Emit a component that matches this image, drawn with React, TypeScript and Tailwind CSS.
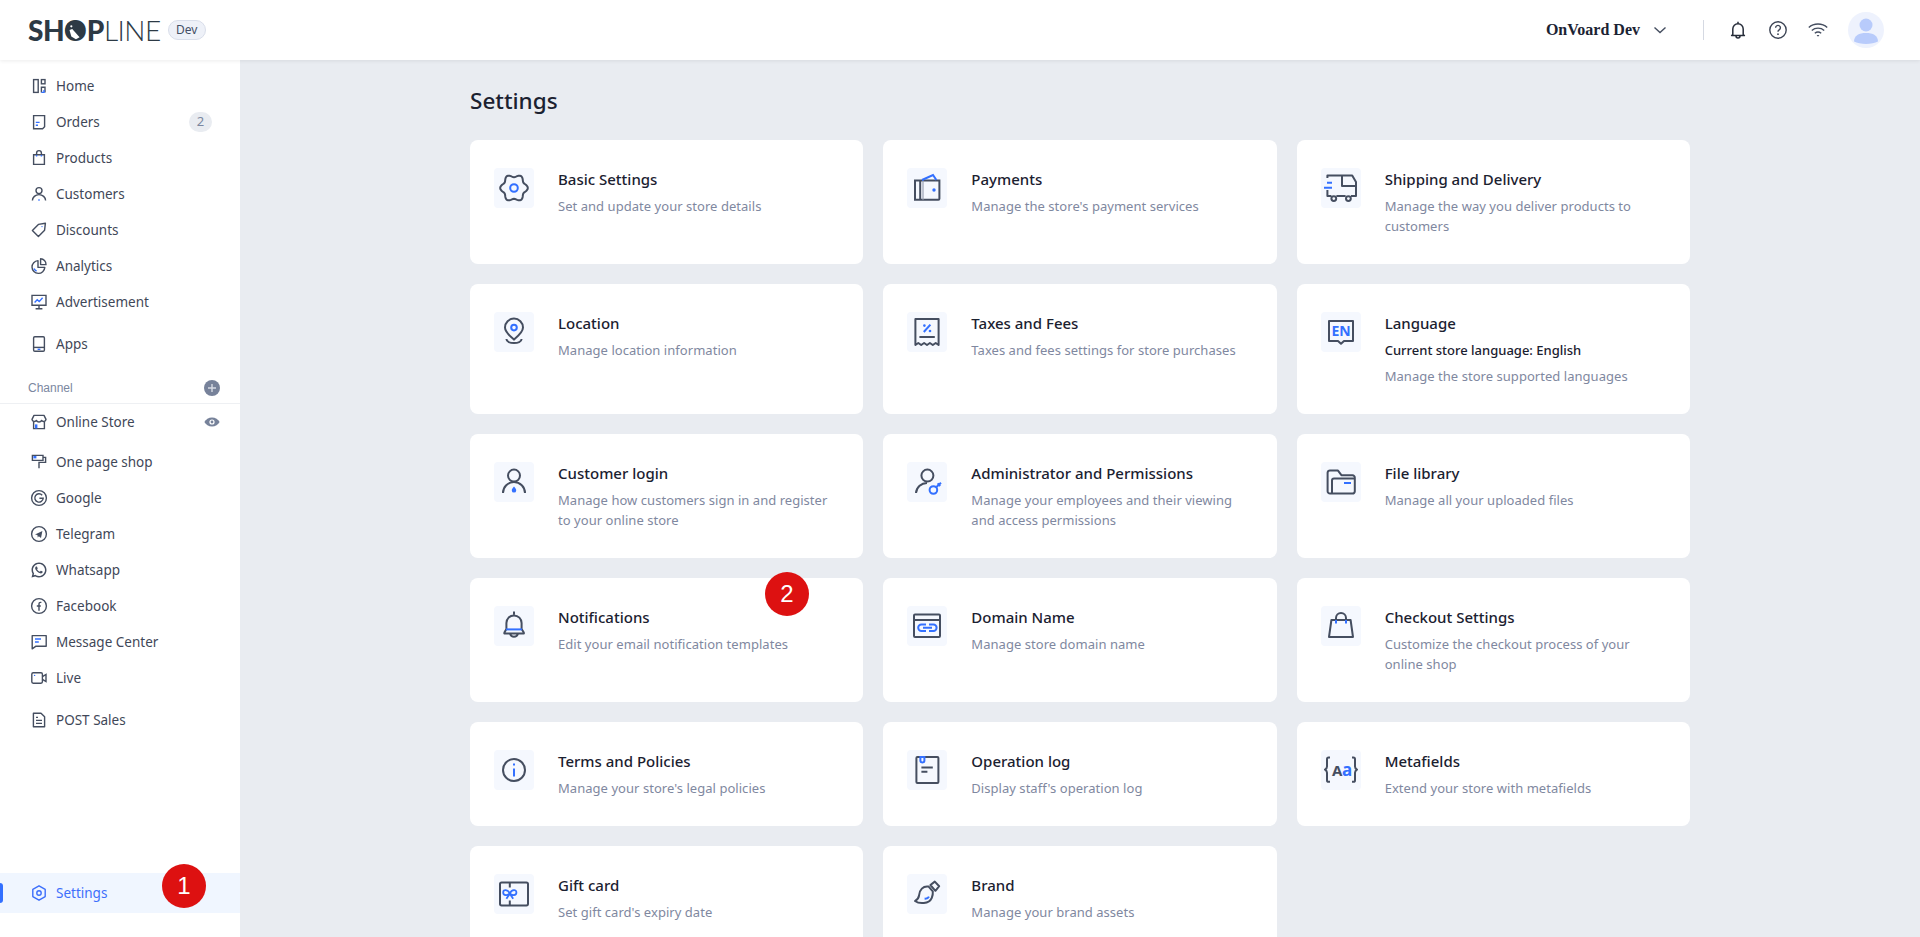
import type { ReactNode } from "react";
import { RiWhatsappLine } from "react-icons/ri";

const D = "#454e60";
const B = "#3370ff";

function Side({ children }: { children: ReactNode }) {
  return (
    <svg viewBox="0 0 18 18" className="w-[18px] h-[18px] shrink-0" fill="none" stroke={D} strokeWidth="1.4">
      {children}
    </svg>
  );
}

function Big({ children }: { children: ReactNode }) {
  return (
    <div className="w-10 h-10 shrink-0 rounded bg-[#f5f8fe]">
      <svg viewBox="0 0 40 40" className="w-10 h-10 overflow-visible" fill="none" stroke={D} strokeWidth="2">
        {children}
      </svg>
    </div>
  );
}

// scalloped outline of the settings gear
const gearPath =
  Array.from({ length: 72 }, (_, i) => {
    const t = (i * 5 * Math.PI) / 180;
    const r = 12.3 + 1.5 * Math.cos(6 * t);
    return `${i === 0 ? "M" : "L"}${(20 + r * Math.cos(t)).toFixed(2)} ${(20 + r * Math.sin(t)).toFixed(2)}`;
  }).join(" ") + " Z";

const navTop = [
  {
    label: "Home",
    icon: (
      <Side>
        <rect x="3.6" y="2.6" width="4.6" height="12.8" />
        <rect x="11.4" y="2.6" width="3.6" height="4.2" />
        <path d="M11.4 15.4v-5.2H15v5.2" />
        <path d="M11.4 15.4h2.6v-2.4" stroke={B} />
      </Side>
    ),
  },
  {
    label: "Orders",
    badge: "2",
    icon: (
      <Side>
        <path d="M3.6 2.6h11v11.2l-2 2h-9z" />
        <path d="M5.8 9.4h3.8M5.8 12.2h2.2" stroke={B} />
      </Side>
    ),
  },
  {
    label: "Products",
    icon: (
      <Side>
        <path d="M3.6 5.8h10.8v9.6H3.6z" />
        <path d="M6.6 5.8V4a2.4 2.4 0 0 1 4.8 0v1.8" />
        <path d="M6.6 6v1.4M11.4 6v1.4" stroke={B} />
      </Side>
    ),
  },
  {
    label: "Customers",
    icon: (
      <Side>
        <circle cx="9" cy="5.6" r="3" />
        <path d="M2.4 15.6a6.6 6 0 0 1 13.2 0" />
        <path d="M9 14.2v1.6" stroke={B} />
      </Side>
    ),
  },
  {
    label: "Discounts",
    icon: (
      <Side>
        <path d="M2.4 9.6l6-6.2 7-1.2-.8 7-6.2 6.4z" strokeLinejoin="round" />
        <circle cx="12" cy="5.6" r=".7" fill={B} stroke="none" />
      </Side>
    ),
  },
  {
    label: "Analytics",
    icon: (
      <Side>
        <path d="M8 3.6a6.4 6.4 0 1 0 6.8 6.8H8z" strokeLinejoin="round" />
        <path d="M10.6 1.8a5.6 5.6 0 0 1 5.4 5.8h-5.4z" strokeLinejoin="round" />
        <path d="M4 11.4a4.4 4.4 0 0 0 2.6 2.6" stroke={B} />
      </Side>
    ),
  },
  {
    label: "Advertisement",
    icon: (
      <Side>
        <path d="M2 2.4h14v9.8H2zM9 12.2v3.4M5.6 15.8h6.8" />
        <path d="M4.6 9.4l2.6-2.6 2 1.8 3.4-3.8" stroke={B} />
      </Side>
    ),
  },
];

const navChannels = [
  {
    label: "One page shop",
    icon: (
      <Side>
        <path d="M2.4 2.4h10.6v5H2.4z" />
        <path d="M13 4.4h2.6v5H9v5.8" />
        <rect x="3.4" y="3" width="3" height="2.4" fill={B} stroke="none" />
      </Side>
    ),
  },
  {
    label: "Google",
    icon: (
      <Side>
        <circle cx="9" cy="9" r="7.4" />
        <path d="M12.2 6.2a4.2 4.2 0 1 0 1 3H9.4" />
      </Side>
    ),
  },
  {
    label: "Telegram",
    icon: (
      <Side>
        <circle cx="9" cy="9" r="7.4" />
        <path d="M5 9.4l7.4-3.4-1.4 7-2.2-1.8-1 1.2-.4-2.4z" fill={D} stroke="none" />
      </Side>
    ),
  },
  {
    label: "Whatsapp",
    icon: <RiWhatsappLine className="w-[18px] h-[18px] shrink-0 text-[#454e60]" />,
  },
  {
    label: "Facebook",
    icon: (
      <Side>
        <circle cx="9" cy="9" r="7.4" />
        <path d="M11.4 5.4h-1a1.4 1.4 0 0 0-1.4 1.4v7M6.8 9h4" />
      </Side>
    ),
  },
  {
    label: "Message Center",
    icon: (
      <Side>
        <path d="M2.2 2.6h14v10.6H6l-3.8 2.6z" strokeLinejoin="round" />
        <path d="M5 6h6M5 9h3.8" stroke={B} />
      </Side>
    ),
  },
  {
    label: "Live",
    icon: (
      <Side>
        <rect x="1.8" y="3.8" width="10.6" height="10.4" rx="1.4" />
        <path d="M12.4 7.6l3.6-2.2v7.2l-3.6-2.2" />
        <circle cx="4.6" cy="6.4" r=".7" fill={B} stroke="none" />
      </Side>
    ),
  },
];

const cards = [
  {
    title: "Basic Settings",
    desc: "Set and update your store details",
    icon: (
      <Big>
        <path d={gearPath} strokeLinejoin="round" />
        <circle cx="20" cy="20" r="3.8" stroke={B} />
      </Big>
    ),
  },
  {
    title: "Payments",
    desc: "Manage the store's payment services",
    icon: (
      <Big>
        <path d="M8 12.4h24.4v18.4a1 1 0 0 1-1 1H8z" />
        <path d="M13.2 12.4v19.4" />
        <path d="M16 12.4v19.4" stroke="#9aa2b2" strokeWidth="1.2" />
        <path d="M15 12l11-5 3.4 5" stroke={B} />
        <circle cx="27" cy="22" r="1.7" fill={B} stroke="none" />
      </Big>
    ),
  },
  {
    title: "Shipping and Delivery",
    desc: "Manage the way you deliver products to customers",
    icon: (
      <Big>
        <path d="M6.4 10V7.4H21V18h14M21 7.4h10.2L35 14v14H30M6.4 22v6h4M15.4 28H24.6" strokeLinejoin="round" />
        <circle cx="12.8" cy="30.6" r="2.4" />
        <circle cx="27.4" cy="30.6" r="2.4" />
        <path d="M6 14.7h5M3 19.7h8" stroke={B} />
      </Big>
    ),
  },
  {
    title: "Location",
    desc: "Manage location information",
    icon: (
      <Big>
        <path d="M20 27.6c-4-3.4-9-7.4-9-12a9 9 0 0 1 18 0c0 4.6-5 8.6-9 12z" />
        <circle cx="20" cy="15.6" r="2.8" stroke={B} />
        <path d="M12.4 27c.2 5.4 15 5.4 15.2 0" />
      </Big>
    ),
  },
  {
    title: "Taxes and Fees",
    desc: "Taxes and fees settings for store purchases",
    icon: (
      <Big>
        <path d="M8.4 33V7h23.2v26l-2.9-2-2.9 2-2.9-2-2.9 2-2.9-2-2.9 2-2.9-2z" strokeLinejoin="round" />
        <path d="M12.4 25h15.4" />
        <path d="M23.4 12.6l-6.6 7.4" stroke={B} />
        <circle cx="17.4" cy="13.6" r="1.3" fill={B} stroke="none" />
        <circle cx="23" cy="19" r="1.3" fill={B} stroke="none" />
      </Big>
    ),
  },
  {
    title: "Language",
    current: "Current store language: English",
    desc: "Manage the store supported languages",
    icon: (
      <Big>
        <path d="M8 9h24v20h-9l-3 2.8-3-2.8H8z" strokeLinejoin="round" />
        <text x="20" y="24" textAnchor="middle" fill={B} stroke="none" fontFamily="'Noto Sans', sans-serif" fontWeight="700" fontSize="14">
          EN
        </text>
      </Big>
    ),
  },
  {
    title: "Customer login",
    desc: "Manage how customers sign in and register to your online store",
    icon: (
      <Big>
        <circle cx="20" cy="13.6" r="6" />
        <path d="M9 31a11 11 0 0 1 22 0" />
        <path d="M20 24.6c1.6 2 2.2 2.9 2.2 3.8a2.2 2.2 0 0 1-4.4 0c0-.9.6-1.8 2.2-3.8z" fill={B} stroke="none" />
      </Big>
    ),
  },
  {
    title: "Administrator and Permissions",
    desc: "Manage your employees and their viewing and access permissions",
    icon: (
      <Big>
        <circle cx="20.4" cy="13.6" r="6" />
        <path d="M9 31a11 11 0 0 1 11-10" />
        <circle cx="26.4" cy="28" r="3.8" stroke={B} />
        <path d="M29.4 25l4.6-4.2M30.6 21.4l2.6 2.6" stroke={B} />
      </Big>
    ),
  },
  {
    title: "File library",
    desc: "Manage all your uploaded files",
    icon: (
      <Big>
        <path d="M11 31.6H9a2.4 2.4 0 0 1-2.4-2.4V10.6A2.4 2.4 0 0 1 9 8.6h8l3.4 4.6H31.4A2.4 2.4 0 0 1 33.8 16v13.4a2.4 2.4 0 0 1-2.4 2.2H11z" strokeLinejoin="round" />
        <path d="M11 31.4V18.4a2 2 0 0 1 2-2h20.6" />
        <path d="M23 21h7" stroke={B} />
      </Big>
    ),
  },
  {
    title: "Notifications",
    desc: "Edit your email notification templates",
    icon: (
      <Big>
        <path d="M20 5.6v3M12.4 23V17a7.6 7.6 0 0 1 15.2 0v6l2.2 3.6a.6.6 0 0 1-.5 1H10.9a.6.6 0 0 1-.5-1z" strokeLinejoin="round" />
        <path d="M16.2 27.8a3.9 3.9 0 0 0 7.6 0" />
        <path d="M12 23.4h16" stroke={B} />
      </Big>
    ),
  },
  {
    title: "Domain Name",
    desc: "Manage store domain name",
    icon: (
      <Big>
        <rect x="7" y="8.4" width="26" height="22.6" rx="1" />
        <path d="M7 14h26" />
        <path d="M19 18.6h-4.6a3.2 3.2 0 0 0 0 6.4H19M22 18.6h4.4a3.2 3.2 0 0 1 0 6.4H22M16 21.8h9" stroke={B} />
      </Big>
    ),
  },
  {
    title: "Checkout Settings",
    desc: "Customize the checkout process of your online shop",
    icon: (
      <Big>
        <path d="M10.4 14h19.2L32 31H8z" strokeLinejoin="round" />
        <path d="M15 14V12a5 5 0 0 1 10 0v2" />
        <path d="M15 14v3.6M25 14v3.6" stroke={B} />
      </Big>
    ),
  },
  {
    title: "Terms and Policies",
    desc: "Manage your store's legal policies",
    icon: (
      <Big>
        <circle cx="20" cy="20" r="11" />
        <path d="M20 18.4v8M20 13.4v2" stroke={B} />
      </Big>
    ),
  },
  {
    title: "Operation log",
    desc: "Display staff's operation log",
    icon: (
      <Big>
        <rect x="9.4" y="7" width="22" height="26" rx="1" />
        <path d="M13.4 7h4v3.4a1.6 1.6 0 0 1-4 0z" fill="none" stroke={B} />
        <path d="M14.4 17.6h11.4M14.4 21.8h6" />
      </Big>
    ),
  },
  {
    title: "Metafields",
    desc: "Extend your store with metafields",
    icon: (
      <Big>
        <path d="M9 7.6H7.6a1.6 1.6 0 0 0-1.6 1.6v7.2c0 1.6-1 2.6-2 3.2 1 .6 2 1.6 2 3.2v7.4a1.6 1.6 0 0 0 1.6 1.6H9" strokeLinejoin="round" />
        <path d="M31 7.6h1.4A1.6 1.6 0 0 1 34 9.2v7.2c0 1.6 1 2.6 2 3.2-1 .6-2 1.6-2 3.2v7.4a1.6 1.6 0 0 1-1.6 1.6H31" strokeLinejoin="round" />
        <text x="11" y="25.5" fill={D} stroke="none" fontFamily="'Noto Sans', sans-serif" fontWeight="700" fontSize="15">
          A
        </text>
        <text x="21" y="25.5" fill={B} stroke="none" fontFamily="'Noto Sans', sans-serif" fontWeight="700" fontSize="17">
          a
        </text>
      </Big>
    ),
  },
  {
    title: "Gift card",
    desc: "Set gift card's expiry date",
    icon: (
      <Big>
        <rect x="6" y="8.4" width="28" height="23" rx="1.6" />
        <path d="M15.8 8.4v5M15.8 26.6v4.8" />
        <path d="M15.8 19.4c-2-4-6.6-4.4-6.6-1s4.6 3.4 6.6 1c2 2.4 6.6 2.2 6.6-1s-4.6-3-6.6 1zM15.8 19.8l-3.4 5M15.8 19.8l3.4 5" stroke={B} strokeWidth="1.8" />
      </Big>
    ),
  },
  {
    title: "Brand",
    desc: "Manage your brand assets",
    icon: (
      <Big>
        <path d="M21.6 12.6c-5.4-1-9.4 3.4-9.6 9-.1 2.6-2 4-4 5.4 4 3 14 3.4 16.8-3.2.8-2 1.2-4.4 1-6.4z" strokeLinejoin="round" />
        <path d="M23.4 11l4.4-3.4 4.4 4.6-3.8 4.6z" strokeLinejoin="round" />
        <path d="M17.6 24.6c2 .2 3.6-.4 4.4-2" stroke={B} />
      </Big>
    ),
  },
];

function NavRow({ label, icon, badge, extra }: { label: string; icon: ReactNode; badge?: string; extra?: ReactNode }) {
  return (
    <div className="flex items-center h-9 pl-[30px] pr-[20px] gap-2 text-[13.5px] text-[#3f4758]">
      {icon}
      <span className="flex-1">{label}</span>
      {badge && (
        <span className="w-[23px] h-5 mr-2 rounded-full bg-[#e9ecf1] flex items-center justify-center text-[13px] text-[#7b879f]">
          {badge}
        </span>
      )}
      {extra}
    </div>
  );
}

function Card({ title, current, desc, icon }: { title: string; current?: string; desc: string; icon: ReactNode }) {
  return (
    <div className="flex gap-6 bg-white rounded-lg pl-6 pr-8 pt-7 pb-7">
      {icon}
      <div className="min-w-0">
        <div className="text-[15px] leading-[22px] font-medium text-[#1b2130]">{title}</div>
        {current && <div className="mt-1.5 mb-1.5 text-[13px] leading-5 font-medium text-[#1b2130]">{current}</div>}
        <div className={`text-[13px] leading-5 tracking-[0.04px] text-[#7f88a0] ${current ? "" : "mt-1.5"}`}>{desc}</div>
      </div>
    </div>
  );
}

export default function App() {
  return (
    <div className="relative h-screen overflow-hidden flex flex-col bg-[#e9ecf1] font-['Noto_Sans',sans-serif]">
      <header className="relative z-10 flex items-center h-[60px] shrink-0 bg-white pl-7 pr-9 shadow-[0_1px_4px_rgba(0,0,0,0.08)]">
        <div className="flex items-center font-['Lato',sans-serif] text-[28px] leading-none text-[#2d3a45]">
          <span className="font-black tracking-[-0.5px]">SH</span>
          <span className="relative font-black">
            O
            <svg viewBox="0 0 24 24" className="absolute left-0 top-[3px] w-[22px] h-[22px]">
              <circle cx="12" cy="12" r="10.5" fill="#2d3a45" />
              <path d="M6 12l3-1 8 9-4 2-5-3z" fill="#fff" />
              <circle cx="8" cy="8" r="1.2" fill="#fff" />
            </svg>
          </span>
          <span className="font-black tracking-[-0.5px]">P</span>
          <span className="font-light tracking-[-0.5px]">LINE</span>
        </div>
        <span className="ml-[7px] w-[38px] h-5 rounded-full bg-[#eef1f8] border border-[#d9deea] flex items-center justify-center text-xs text-[#444f66]">
          Dev
        </span>

        <div className="ml-auto flex items-center">
          <span className="font-['Liberation_Serif',serif] font-bold text-base text-[#1b2333]">OnVoard Dev</span>
          <svg viewBox="0 0 16 16" className="w-4 h-4 ml-3" fill="none" stroke={D} strokeWidth="1.4">
            <path d="M2.5 5.5L8 10.5l5.5-5" />
          </svg>
          <div className="w-px h-5 ml-[35px] bg-[#d5d9e2]" />
          <svg viewBox="0 0 20 20" className="w-5 h-5 ml-6" fill="none" stroke="#272d3a" strokeWidth="1.5">
            <path d="M10 1.8v1.6M4.8 14.6V9a5.2 5.2 0 0 1 10.4 0v5.6l1.2 1H3.6zM8 16a2 2 0 0 0 4 0" strokeLinejoin="round" />
          </svg>
          <svg viewBox="0 0 20 20" className="w-5 h-5 ml-5" fill="none" stroke="#3d4555" strokeWidth="1.4">
            <circle cx="10" cy="10" r="8.2" />
            <path d="M7.6 7.8a2.4 2.4 0 1 1 3.6 2.1c-.8.5-1.2 1-1.2 1.9" />
            <circle cx="10" cy="14.2" r=".9" fill="#3d4555" stroke="none" />
          </svg>
          <svg viewBox="0 0 20 20" className="w-5 h-5 ml-5" fill="none" stroke={D} strokeWidth="1.4">
            <path d="M.8 7.4c5-4.6 13.4-4.6 18.4 0M3.8 10.4c3.4-3 9-3 12.4 0M6.8 13.2c1.8-1.4 4.6-1.4 6.4 0" />
            <path d="M8.6 15h2.8L10 16.8z" fill={D} stroke="none" />
          </svg>
          <div className="ml-5 w-9 h-9 rounded-full bg-[#eef2fd] overflow-hidden">
            <svg viewBox="0 0 36 36" className="w-9 h-9">
              <circle cx="18" cy="13" r="6.5" fill="#b8cbfb" />
              <path d="M6 29.5c0-6 5-8.5 12-8.5s12 2.5 12 8.5c-3 1.6-7.5 2.5-12 2.5s-9-.9-12-2.5z" fill="#b8cbfb" />
            </svg>
          </div>
        </div>
      </header>

      <div className="flex flex-1 min-h-0">
        <aside className="w-[240px] shrink-0 bg-white flex flex-col pt-2">
          {navTop.map((n) => (
            <NavRow key={n.label} {...n} />
          ))}
          <div className="mt-1.5">
            <NavRow
              label="Apps"
              icon={
                <Side>
                  <rect x="3.6" y="1.8" width="10.8" height="14.4" rx="1.2" />
                  <path d="M3.6 12.4h10.8" />
                  <path d="M7.6 14.3h2.8" stroke={B} />
                </Side>
              }
            />
          </div>
          <div className="mt-[11px] h-[31px] pb-px pl-7 pr-5 flex items-center justify-between border-b border-[#eef0f3] font-['Liberation_Sans',sans-serif] text-xs text-[#7b879f]">
            <span>Channel</span>
            <span className="w-4 h-4 rounded-full bg-[#77829a] flex items-center justify-center">
              <svg viewBox="0 0 10 10" className="w-2.5 h-2.5" stroke="#d6dae3" strokeWidth="1.4">
                <path d="M5 1v8M1 5h8" />
              </svg>
            </span>
          </div>
          <NavRow
            label="Online Store"
            icon={
              <Side>
                <path d="M4 2.4h10l2 4a2.4 2.4 0 0 1-4.4 1 2.9 2.9 0 0 1-5.2 0A2.4 2.4 0 0 1 2 6.4z" strokeLinejoin="round" />
                <path d="M3.6 8.6v7h10.8v-7" />
                <rect x="5" y="11.4" width="2.4" height="4" fill={B} stroke="none" />
              </Side>
            }
            extra={
              <svg viewBox="0 0 16 16" className="w-4 h-4 shrink-0">
                <path d="M8 3.4C4.6 3.4 1.8 5.4.4 8c1.4 2.6 4.2 4.6 7.6 4.6s6.2-2 7.6-4.6C14.2 5.4 11.4 3.4 8 3.4z" fill="#77829a" />
                <circle cx="8" cy="8" r="2.6" fill="#fff" />
                <circle cx="8" cy="8" r="1.4" fill="#77829a" />
              </svg>
            }
          />
          <div className="mt-1">
            {navChannels.map((n) => (
              <NavRow key={n.label} {...n} />
            ))}
          </div>
          <div className="mt-1.5">
            <NavRow
              label="POST Sales"
              icon={
                <Side>
                  <path d="M3.4 2.2h7.6l3.6 3.6v10H3.4z" strokeLinejoin="round" />
                  <path d="M6 6.4h2M6 9.4h6M6 12.4h6" />
                </Side>
              }
            />
          </div>
          <div className="relative mt-auto mb-6 h-10 pl-[30px] flex items-center gap-2 bg-[#f0f6ff] text-[13.5px] text-[#3d6ffb]">
            <div className="absolute left-0 top-2.5 w-[3px] h-5 rounded-r bg-[#3370ff]" />
            <svg viewBox="0 0 18 18" className="w-[18px] h-[18px]" fill="none" stroke="#3d6ffb" strokeWidth="1.4">
              <path d="M9 1.8l6.2 3.6v7.2L9 16.2l-6.2-3.6V5.4z" strokeLinejoin="round" />
              <circle cx="9" cy="9" r="2.2" />
            </svg>
            Settings
          </div>
        </aside>

        <main className="flex-1 min-w-0 overflow-hidden pt-6">
          <div className="w-[1220px] mx-auto">
            <h1 className="h-[34px] mb-[22px] text-[22.5px] leading-[34px] font-medium text-[#1b2130]">Settings</h1>
            <div className="grid grid-cols-3 gap-5">
              {cards.map((c) => (
                <Card key={c.title} {...c} />
              ))}
            </div>
          </div>
        </main>
      </div>

      <div className="absolute left-[162px] top-[864px] z-20 w-11 h-11 rounded-full bg-[#dd1111] flex items-center justify-center font-['Liberation_Sans',sans-serif] text-2xl text-white">
        1
      </div>
      <div className="absolute left-[765px] top-[572px] z-20 w-11 h-11 rounded-full bg-[#dd1111] flex items-center justify-center font-['Liberation_Sans',sans-serif] text-2xl text-white">
        2
      </div>
    </div>
  );
}
